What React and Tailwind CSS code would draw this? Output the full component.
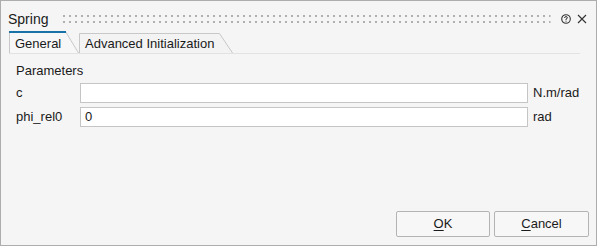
import React from "react";

function Tab({ label, active, width, height }) {
  const slant = 13;
  const w = width;
  const h = height;
  return (
    <div className="relative" style={{ width: w, height: h }}>
      <svg className="absolute inset-0" width={w} height={h}>
        <path
          d={`M0.5 ${h} L0.5 0.5 L${w - slant - 0.5} 0.5 L${w - 0.5} ${h}`}
          fill={active ? "#f7f7f7" : "#f3f3f3"}
          stroke="#c8c8c8"
          strokeWidth="1"
        />
        {active && <rect x="0" y="0" width={w - slant} height="2" fill="#1a73a8" />}
      </svg>
      <span
        className={`absolute left-[6px] ${active ? "top-[5px]" : "top-[3px]"} text-[13px] leading-[16px] text-[#1a1a1a] whitespace-nowrap`}
      >
        {label}
      </span>
    </div>
  );
}

function Grip() {
  return (
    <svg className="flex-1 h-[8px]" height="8">
      <defs>
        <pattern id="dots" width="6" height="6" patternUnits="userSpaceOnUse">
          <rect x="0" y="0" width="2" height="2" fill="#b0b0b0" />
        </pattern>
      </defs>
      <rect x="0" y="0" width="100%" height="8" fill="url(#dots)" />
    </svg>
  );
}

export default function App() {
  return (
    <div
      className="w-[597px] h-[246px] border border-[#adadad] bg-[#f5f5f5] flex flex-col text-[#1a1a1a]"
      style={{ fontFamily: '"Liberation Sans", Arial, sans-serif' }}
    >
      <div className="h-[31px] flex items-start pl-[7px] pr-[9px]">
        <span className="text-[14px] leading-[16px] mt-[10px]">Spring</span>
        <div className="flex-1 ml-[15px] mr-[10px] mt-[14px] flex">
          <Grip />
        </div>
        <svg width="10" height="10" viewBox="0 0 10 10" className="mt-[13px]">
          <circle cx="5" cy="5" r="4.3" fill="none" stroke="#333" strokeWidth="1.1" />
          <path d="M3.6 4 Q3.6 2.6 5 2.6 Q6.4 2.6 6.4 3.8 Q6.4 4.6 5 5.1 L5 6" fill="none" stroke="#333" strokeWidth="1" />
          <rect x="4.5" y="6.7" width="1" height="1" fill="#333" />
        </svg>
        <svg width="10" height="10" viewBox="0 0 10 10" className="ml-[6px] mt-[13px]">
          <path d="M1 1 L9 9 M9 1 L1 9" stroke="#333" strokeWidth="1.1" />
        </svg>
      </div>
      <div className="ml-[8px] mr-[16px] flex items-end h-[22px] border-b border-[#e2e2e2]">
        <Tab label="General" active width={70} height={22} />
        <Tab label="Advanced Initialization" width={154} height={20} />
      </div>
      <div className="pl-[15px] pr-[13px] pt-[9px] flex flex-col">
        <div className="text-[13px] leading-[16px]">Parameters</div>
        <div className="flex items-center mt-[4px] h-[20px]">
          <span className="w-[64px] text-[13px]">c</span>
          <div className="w-[448px] h-[20px] bg-white border border-[#c5c5c5]" />
          <span className="ml-[5px] text-[13px]">N.m/rad</span>
        </div>
        <div className="flex items-center mt-[4px] h-[20px]">
          <span className="w-[64px] text-[13px]">phi_rel0</span>
          <div className="w-[448px] h-[20px] bg-white border border-[#c5c5c5] flex items-center pl-[4px] text-[13px]">0</div>
          <span className="ml-[5px] text-[13px]">rad</span>
        </div>
      </div>
      <div className="flex-1" />
      <div className="flex justify-end gap-[4px] pr-[7px] pb-[8px]">
        <button className="w-[94px] h-[26px] border border-[#b4b4b4] rounded-[2px] bg-[#f7f7f7] text-[13px]">
          <span className="underline underline-offset-2">O</span>K
        </button>
        <button className="w-[95px] h-[26px] border border-[#b4b4b4] rounded-[2px] bg-[#f7f7f7] text-[13px]">
          <span className="underline underline-offset-2">C</span>ancel
        </button>
      </div>
    </div>
  );
}
